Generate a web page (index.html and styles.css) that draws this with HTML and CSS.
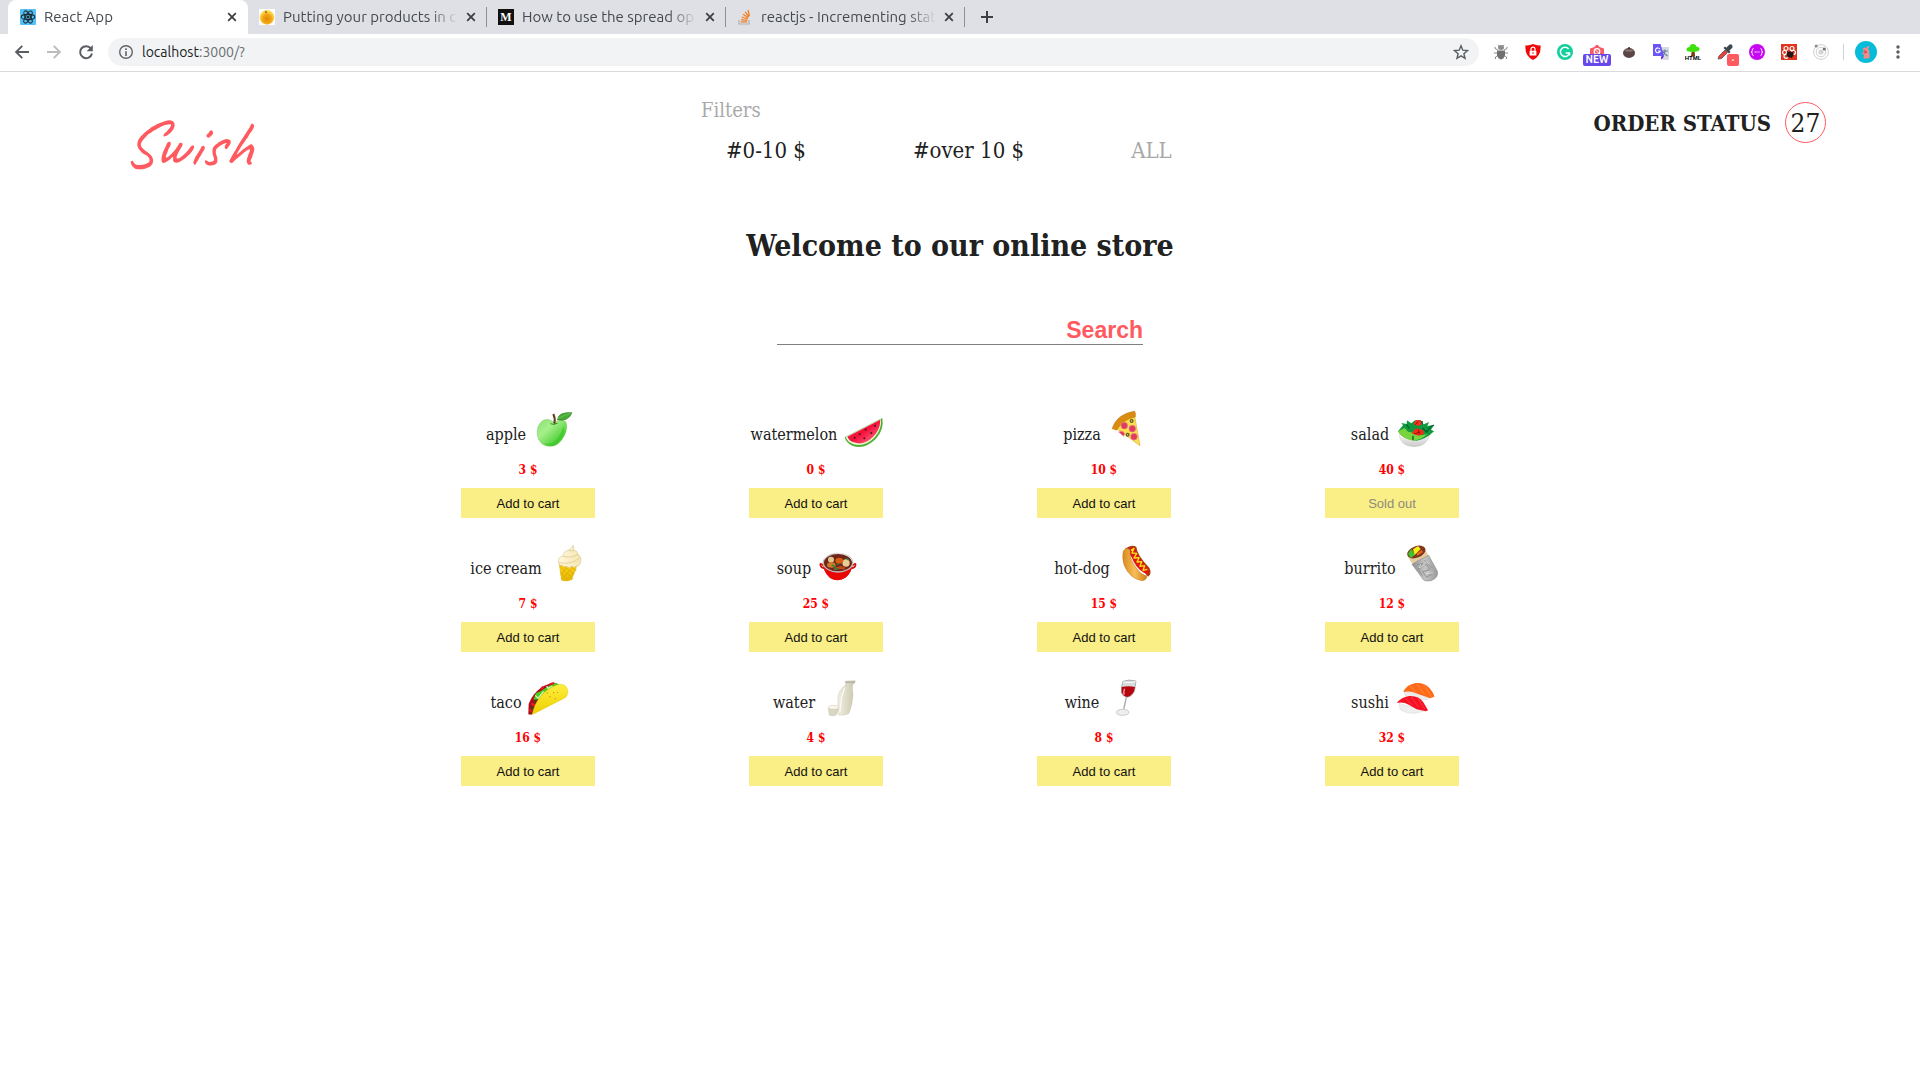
FILE: index.html
```html
<!DOCTYPE html>
<html lang="en">
<head>
<meta charset="utf-8">
<meta name="viewport" content="width=device-width, initial-scale=1">
<title>React App</title>
<link rel="stylesheet" href="styles.css">
</head>
<body>
<svg class="defs" aria-hidden="true">
  <defs>
    <symbol id="close" viewBox="0 0 10 10"><path d="M1.2 1.2 8.8 8.8M8.8 1.2 1.2 8.8" stroke="#3c4043" stroke-width="1.8" fill="none"/></symbol>
    <linearGradient id="gApple" x1="0" y1="0" x2="1" y2="1"><stop offset="0" stop-color="#8be070"/><stop offset=".35" stop-color="#a6f08c"/><stop offset=".75" stop-color="#4fd03a"/><stop offset="1" stop-color="#7bdd66"/></linearGradient>
    <linearGradient id="gMelon" x1="0" y1="0" x2="1" y2="1"><stop offset="0" stop-color="#ff2a50"/><stop offset=".5" stop-color="#f5103c"/><stop offset="1" stop-color="#ff7f96"/></linearGradient>
    <linearGradient id="gCone" x1="0" y1="0" x2="0" y2="1"><stop offset="0" stop-color="#fbd21c"/><stop offset="1" stop-color="#e8b800"/></linearGradient>
    <linearGradient id="gCream" x1="0" y1="0" x2="1" y2="0"><stop offset="0" stop-color="#fff8dc"/><stop offset="1" stop-color="#f5e5b0"/></linearGradient>
    <linearGradient id="gBun" x1="0" y1="0" x2="1" y2="0"><stop offset="0" stop-color="#d98a1f"/><stop offset=".5" stop-color="#f8bd58"/><stop offset="1" stop-color="#d07d14"/></linearGradient>
    <linearGradient id="gFoil" x1="0" y1="0" x2="1" y2="0"><stop offset="0" stop-color="#8f8f8f"/><stop offset=".5" stop-color="#c4c4c4"/><stop offset="1" stop-color="#9a9a9a"/></linearGradient>
    <linearGradient id="gTaco" x1="0" y1="0" x2="0" y2="1"><stop offset="0" stop-color="#ffee3e"/><stop offset="1" stop-color="#eed000"/></linearGradient>
    <linearGradient id="gBottle" x1="0" y1="0" x2="1" y2="0"><stop offset="0" stop-color="#f1efe4"/><stop offset="1" stop-color="#c9c5ac"/></linearGradient>
    <linearGradient id="gBowl" x1="0" y1="0" x2="0" y2="1"><stop offset="0" stop-color="#ffffff"/><stop offset="1" stop-color="#c9c9c9"/></linearGradient>
    <radialGradient id="gOrange" cx=".5" cy=".6"><stop offset="0" stop-color="#e08a00"/><stop offset=".6" stop-color="#f2a51a"/><stop offset="1" stop-color="#ffd84a"/></radialGradient>
  </defs>
</svg>

<header class="browser">
  <nav class="tabs" aria-label="Open tabs">
    <div class="tab tab-active">
      <svg class="favicon" viewBox="0 0 16 16"><rect width="16" height="16" rx="1" fill="#53c1f5"/><g fill="none" stroke="#1c2b33" stroke-width="1.1"><ellipse cx="8" cy="8" rx="6.8" ry="2.6"/><ellipse cx="8" cy="8" rx="6.8" ry="2.6" transform="rotate(60 8 8)"/><ellipse cx="8" cy="8" rx="6.8" ry="2.6" transform="rotate(120 8 8)"/></g><circle cx="8" cy="8" r="1.5" fill="#1c2b33"/></svg>
      <span class="tab-title">React App</span>
      <button class="tab-close" aria-label="Close tab"><svg><use href="#close"/></svg></button>
    </div>
    <div class="tab">
      <svg class="favicon" viewBox="0 0 16 16"><rect width="16" height="16" fill="#fff"/><circle cx="8" cy="8.4" r="7.3" fill="url(#gOrange)"/><path d="M6 2.5 8 4M7 2v2" stroke="#6b5a12" stroke-width=".8"/></svg>
      <span class="tab-title">Putting your products in c</span>
      <button class="tab-close" aria-label="Close tab"><svg><use href="#close"/></svg></button>
    </div>
    <div class="tab">
      <svg class="favicon" viewBox="0 0 16 16"><rect width="16" height="16" fill="#12100e"/><text x="8" y="12" text-anchor="middle" font-family="Liberation Serif, serif" font-weight="700" font-size="12" fill="#fff">M</text></svg>
      <span class="tab-title">How to use the spread op</span>
      <button class="tab-close" aria-label="Close tab"><svg><use href="#close"/></svg></button>
    </div>
    <div class="tab">
      <svg class="favicon" viewBox="0 0 16 16" fill="none"><path d="M2 11v4h10v-4" stroke="#a9b1b8" stroke-width="1.2"/><path d="M3.8 12.9h6.4M4 10.6l6.4.7M4.6 8l6.2 1.9M6 5.2l5.3 3.4M8.2 2.8l3.7 5M11 1l1.4 6" stroke="#f48024" stroke-width="1.3"/></svg>
      <span class="tab-title">reactjs - Incrementing stat</span>
      <button class="tab-close" aria-label="Close tab"><svg><use href="#close"/></svg></button>
    </div>
    <button class="new-tab" aria-label="New tab"><svg viewBox="0 0 12 12"><path d="M6 0v12M0 6h12" stroke="#3c4043" stroke-width="2"/></svg></button>
  </nav>
  <div class="toolbar">
    <div class="nav-buttons">
      <button class="icon" aria-label="Back"><svg viewBox="0 0 16 16"><path d="M15 8H2.5M8.3 1.8 2.1 8l6.2 6.2" fill="none" stroke="#5a5d61" stroke-width="1.9"/></svg></button>
      <button class="icon" aria-label="Forward"><svg viewBox="0 0 16 16"><path d="M1 8h12.5M7.7 1.8 13.9 8l-6.2 6.2" fill="none" stroke="#babcbe" stroke-width="1.9"/></svg></button>
      <button class="icon" aria-label="Reload"><svg viewBox="0 0 16 16"><path d="M13 4.6A6 6 0 1 0 14 9.5" fill="none" stroke="#5a5d61" stroke-width="2"/><path d="M14.8 1v6.2H8.6z" fill="#5a5d61"/></svg></button>
    </div>
    <div class="omnibox">
      <svg class="icon" viewBox="0 0 16 16"><circle cx="8" cy="8" r="6.3" fill="none" stroke="#5f6368" stroke-width="1.4"/><path d="M8 7.2V12M8 4.2v1.7" stroke="#5f6368" stroke-width="1.6"/></svg>
      <span class="url"><b>localhost</b>:3000/?</span>
      <button class="icon" aria-label="Bookmark this page"><svg viewBox="0 0 16 16"><path d="m8 1.8 1.8 4.4 4.7.4-3.6 3.1 1.1 4.6-4-2.5-4 2.5 1.1-4.6-3.6-3.1 4.7-.4z" fill="none" stroke="#5a5d61" stroke-width="1.4"/></svg></button>
    </div>
    <div class="extensions">
      <svg class="icon" viewBox="0 0 16 16"><g fill="none" stroke="#8a8a8a" stroke-width="1"><path d="M5 6 2 4.5V2.8M11 6l3-1.500V2.800M4 9H1M12 9h3M5 11.500 2.500 13v2M11 11.500l2.500 1.500v2M6 2 5 .8M10 2l1-1.200"/></g><ellipse cx="8" cy="3.500" rx="3" ry="2.500" fill="#8c8c8c"/><path d="M4 6.500h8V11q-1 4-4 4.500Q5 15 4 11z" fill="#707070"/></svg>
      <svg class="icon" viewBox="0 0 16 16"><path d="M8 0q4 1.800 7.500 1.300Q16.500 11.500 8 16-.5 11.500.5 1.300 4 1.800 8 0z" fill="#f00606"/><rect x="4.600" y="6.800" width="6.800" height="4.800" rx=".6" fill="#fff"/><path d="M6 7V5.200a2 2 0 0 1 4 0V7" fill="none" stroke="#fff" stroke-width="1.200"/><circle cx="8" cy="9" r=".8" fill="#f00606"/></svg>
      <svg class="icon" viewBox="0 0 16 16"><circle cx="8" cy="8" r="8" fill="#12cf9b"/><path d="M11.600 5A4.600 4.600 0 1 0 12.500 9H8.600M12.500 9v2.500" fill="none" stroke="#fff" stroke-width="1.500"/></svg>
      <div class="extension">
        <svg class="icon" viewBox="0 0 16 16"><path d="M5.500 3 7 1h2l1.500 2L15 4.500V10H1V4.500z" fill="#f55a66"/><circle cx="8" cy="7.500" r="2.800" fill="none" stroke="#fff" stroke-width="1.200"/><path d="m6 5.500 4 4" stroke="#fff"/></svg>
        <span class="badge badge-new">NEW</span>
      </div>
      <svg class="icon" viewBox="0 0 16 16"><ellipse cx="8" cy="9" rx="6" ry="5" fill="#5b4645"/><path d="M3 6.500Q8 3.500 13 6.500 8 9 3 6.500z" fill="#8a7573"/><path d="M7.300 5.500V3h1.500v2.500z" fill="#3b2a2a"/></svg>
      <svg class="icon" viewBox="0 0 16 16"><path d="M7 3h9v13H10z" fill="#d7dade"/><path d="M9 7h6M12 5.500V7c0 2-1 4-3 5m1-4 4.500 4" stroke="#64829c" stroke-width="1.200" fill="none"/><path d="M0 0h7.500L11 12H0z" fill="#6b55f5"/><path d="m8 12.500 3-.5-2.500 4z" fill="#4a10cf"/><path d="M6.900 5A2.400 2.400 0 1 0 7.200 7H5" fill="none" stroke="#fff" stroke-width="1.100"/></svg>
      <svg class="icon" viewBox="0 0 16 16"><path d="M7 6h2.500l.5 6H6z" fill="#7a3c0b"/><path d="M8 0q3 0 3.300 2.500Q15 3 14.500 5.500 14 8 11 7.500L9 8H6.500L4 7.500Q1 7.500 1.500 5 2 3 4.600 3 5 .2 8 0z" fill="#3fe010"/><text x="8" y="16" text-anchor="middle" font-family="Liberation Sans, sans-serif" font-weight="700" font-size="6" fill="#000">HTML</text></svg>
      <div class="extension">
        <svg class="icon" viewBox="0 0 16 16"><path d="M1 15 2 12l6-6 2.500 2.500-6 6z" fill="#e8413b" stroke="#555" stroke-width=".8"/><path d="m6.500 4 5.500 5.500 1.500-1.500-1.200-1.200L15.500 3.500Q16 1 14 .3 12.500 0 11 2L9.200 3.700 8 2.500z" fill="#3d464c"/></svg>
        <span class="badge badge-dot">·</span>
      </div>
      <svg class="icon" viewBox="0 0 16 16"><circle cx="8" cy="8" r="8" fill="#c808f3"/><path d="M4.500 4.500Q3 4.500 3.300 6.500 3.400 8 2 8q1.400 0 1.300 1.500Q3 11.500 4.500 11.500M11.500 4.500q1.500 0 1.200 2Q12.600 8 14 8q-1.400 0-1.300 1.500.3 2-1.200 2M5.500 8h1.300M7.400 8h1.200M9.300 8h1.300" fill="none" stroke="#fff" stroke-width="1"/></svg>
      <svg class="icon" viewBox="0 0 16 16"><rect width="16" height="16" fill="#e0351f"/><g fill="none" stroke="#fff" stroke-width="1.200"><circle cx="5" cy="4.500" r="2"/><circle cx="11" cy="4.500" r="2"/><circle cx="3.600" cy="8.500" r="2"/><circle cx="12.500" cy="8.500" r="2"/><circle cx="5" cy="12.300" r="2"/></g><ellipse cx="9" cy="10.500" rx="3.500" ry="3" fill="#241614"/><path d="m6 7 5 7M12 7.500l-5 6" stroke="#241614"/></svg>
      <svg class="icon" viewBox="0 0 16 16"><g fill="none" stroke="#cfcfcf"><circle cx="8" cy="8" r="7.400"/><circle cx="8" cy="8" r="4.800"/></g><circle cx="8" cy="8" r="2.600" fill="#d4d4d4"/><circle cx="3.200" cy="2" r="1.600" fill="#8d8d8d"/><circle cx="11.300" cy="5" r="1.600" fill="#707070"/></svg>
    </div>
    <div class="profile">
      <svg class="avatar" viewBox="0 0 22 22"><circle cx="11" cy="11" r="11" fill="#07bcd9"/><path d="M8 8.500Q7.500 6.500 10 6.500L11.500 7Q12 4.500 14 5q.5 1.500-1 3 2 1.500 1.200 4 1.300 3-.2 5.500H8.500L9 14l-2.500-2 2.500-.8Z" fill="#f48a8a"/><path d="m9 9.500 3 1.500-3 1" stroke="#d94040" fill="none"/></svg>
      <button class="menu" aria-label="Browser menu"><svg viewBox="0 0 4 14" fill="#5a5d61"><circle cx="2" cy="2" r="1.700"/><circle cx="2" cy="7" r="1.700"/><circle cx="2" cy="12" r="1.700"/></svg></button>
    </div>
  </div>
</header>

<main class="store">
  <div class="store-header">
    <a class="logo" href="#">Swish</a>
    <section class="filters">
      <p class="filters-label">Filters</p>
      <div class="filters-list">
        <button class="filter">#0-10 $</button>
        <button class="filter">#over 10 $</button>
        <button class="filter filter-current">ALL</button>
      </div>
    </section>
    <a class="order" href="#">ORDER STATUS <span class="order-count">27</span></a>
  </div>

  <h1 class="title">Welcome to our online store</h1>

  <form class="search">
    <input class="search-input" type="text" placeholder="Search" aria-label="Search">
  </form>

  <ul class="products">
    <li class="product">
      <div class="product-name">apple
        <svg class="food" viewBox="270 54 120 120"><path d="M343 99q18-15 34-4 8 18-4 42-16 32-42 32-32-1-39-32-3-32 16-45 20-10 35 7z" fill="url(#gApple)" stroke="#4eae3a" stroke-width="1"/><path d="M312 160q22 5 40-14 12-14 18-38 6 16-4 34-14 24-34 25-12 0-20-7z" fill="#38c724" opacity=".65"/><path d="M331 101q12 6 22-2" fill="none" stroke="#379a24" stroke-width="3"/><path d="M343 101q4-14-3-29" fill="none" stroke="#65401e" stroke-width="6"/><path d="M352 89q3-24 44-21-12 29-44 21z" fill="#45ab33" stroke="#2a6a22" stroke-width="1.500"/><path d="M354 86q18-11 38-16" fill="none" stroke="#77ce67" stroke-width="2"/></svg>
      </div>
      <p class="price">3 $</p>
      <button class="cart">Add to cart</button>
    </li>
    <li class="product">
      <div class="product-name">watermelon
        <svg class="food" viewBox="1209 54 120 120"><path d="M1220 142 1333 84q6 36-20 63-33 33-70 20-18-7-23-25z" fill="#4fb034"/><path d="M1223 141 1329 87q3 32-20 56-30 30-64 19-17-6-22-21z" fill="#eaf7d0"/><path d="m1228 140 99-51q0 30-22 52-28 27-58 16-14-5-19-17z" fill="url(#gMelon)"/><g fill="#451820"><circle cx="1265" cy="133" r="3"/><circle cx="1283" cy="119" r="3"/><circle cx="1311" cy="107" r="3"/><circle cx="1250" cy="143" r="3"/><circle cx="1279" cy="145" r="3"/><circle cx="1300" cy="129" r="3"/></g></svg>
      </div>
      <p class="price">0 $</p>
      <button class="cart">Add to cart</button>
    </li>
    <li class="product">
      <div class="product-name">pizza
        <svg class="food" viewBox="256 54 120 120"><path d="M286 112q20-28 58-38l17 93z" fill="#fbe04d" stroke="#e0a92a" stroke-width="2"/><path d="M277 116q14-44 68-53 4 6 2 18-38 7-56 40z" fill="#d98b12" stroke="#b16b08" stroke-width="1"/><g fill="#df3a5f" stroke="#ec8c88" stroke-width="2"><circle cx="314" cy="107" r="10"/><circle cx="338" cy="116" r="10"/><path d="M297 126q14-7 18 5l-3 8z"/><circle cx="343" cy="140" r="10"/></g><g fill="#fbe78c" stroke="#5d5d21" stroke-width="4"><circle cx="336" cy="93" r="4"/><circle cx="324" cy="134" r="4"/></g></svg>
      </div>
      <p class="price">10 $</p>
      <button class="cart">Add to cart</button>
    </li>
    <li class="product">
      <div class="product-name">salad
        <svg class="food" viewBox="1121 54 120 120"><path d="M1139 130q2 39 44 40 42 0 50-42z" fill="url(#gBowl)" stroke="#bbb" stroke-width="1"/><path d="m1136 124 15-18-5-7 16 3 1-11 13 9 12-10 7 10 16-8-2 13 20-9-5 12 20-3-9 14 9 5q-24 24-53 28-42-4-55-28z" fill="#0c9a3d"/><path d="m1136 124 20-10 10 11 15 3 24 8 20-4q-20 18-42 20-32-4-47-28z" fill="#78d43d"/><path d="m1182 102 8-12h14l6 11-13 8z" fill="#f03320"/><path d="m1177 130 12-15 22 5 3 12-17 5z" fill="#f32d17"/><path d="m1184 132 19-6M1196 119l5 15M1188 104l8-9" stroke="#9a1208" stroke-width="3"/><path d="m1209 114 13 12 12-16 10-5M1162 104l8 12M1211 105l-5-11M1181 137v14" fill="none" stroke="#075e32" stroke-width="4"/></svg>
      </div>
      <p class="price">40 $</p>
      <button class="cart cart-sold" disabled>Sold out</button>
    </li>
    <li class="product">
      <div class="product-name">ice cream
        <svg class="food" viewBox="319 456 120 120"><path d="m358 519 8 52q14 5 30-2l16-43z" fill="url(#gCone)" stroke="#c7a000" stroke-width="1"/><path d="m362 529 38 39M361 545l23 26M371 528l33 25M389 528l21 12M379 534l-17 22M399 534l-34 34M410 539l-31 32" stroke="#d8a800" stroke-width="2"/><path d="M357 519q-5-19 14-21-2-14 15-17 10-3 14-15 5 8 2 15 12 1 13 12 12 7 8 22-2 15-13 13-7 8-13 1-10 9-15 0-11 4-14-3-9 2-11-7z" fill="url(#gCream)" stroke="#d1bd8b" stroke-width="1.500"/><path d="M371 499q24 7 44-6M386 481q10 4 17 0M357 517q33 10 63-13" fill="none" stroke="#d8c28a" stroke-width="2"/></svg>
      </div>
      <p class="price">7 $</p>
      <button class="cart">Add to cart</button>
    </li>
    <li class="product">
      <div class="product-name">soup
        <svg class="food" viewBox="1127 456 120 120"><path d="M1151 526q-11-10-7 1 1 7 12 8M1240 526q11-10 8 1-1 7-12 8" fill="none" stroke="#d40b05" stroke-width="5"/><path d="M1150 518h91q-2 28-23 45-24 15-47 0-19-19-21-45z" fill="#f10d05"/><path d="M1154 535q42 24 82 0-3 16-16 27-23 15-46 2-17-12-20-29z" fill="#e80703"/><ellipse cx="1196" cy="518" rx="44" ry="28" fill="#722419" stroke="#bbb" stroke-width="4"/><circle cx="1175" cy="509" r="9" fill="#dfc68f"/><circle cx="1220" cy="519" r="11" fill="#e5ce95"/><ellipse cx="1200" cy="512" rx="12" ry="9" fill="#da5b12"/><ellipse cx="1176" cy="525" rx="13" ry="8" fill="#ce7a28"/><path d="m1184 537 20-5 12 4" stroke="#c9461b" stroke-width="8" fill="none"/><path d="m1178 525 9 5 2 8 9-4M1192 524l7-3M1222 505l6 6" fill="none" stroke="#168b44" stroke-width="4"/><path d="M1154 508q16-24 44-18 31 0 42 24" fill="none" stroke="#fff" stroke-width="2"/></svg>
      </div>
      <p class="price">25 $</p>
      <button class="cart">Add to cart</button>
    </li>
    <li class="product">
      <div class="product-name">hot-dog
        <svg class="food" viewBox="285 456 120 120"><path d="M318 477q22-16 34-6 2 25 39 62 9 19-4 27z" fill="#a83c0c"/><path d="M333 475q12-8 16 1 1 21 37 57 7 9 2 20-28-7-44-38-11-22-11-40z" fill="#e31713"/><path d="M313 483q9-14 20-3-2 29 21 57 15 19 29 20 2 13-15 15-36-7-52-45-8-24-3-44z" fill="url(#gBun)" stroke="#bd7415" stroke-width="1.500"/><path d="m336 481 9-6-6 14 14 1-8 14 15-1-6 13 14-1-5 14 14-2-5 14 13-3" fill="none" stroke="#ffe516" stroke-width="4" stroke-linejoin="round"/></svg>
      </div>
      <p class="price">15 $</p>
      <button class="cart">Add to cart</button>
    </li>
    <li class="product">
      <div class="product-name">burrito
        <svg class="food" viewBox="1139 456 120 120"><path d="m1162 486 51-9 38 67q5 19-19 28-16 3-22-2l-37-53q-12-14-11-31z" fill="#e6cca0"/><path d="m1175 523 20-12 30-15 26 48q5 19-19 28-16 3-22-2z" fill="url(#gFoil)" stroke="#929292" stroke-width="2"/><ellipse cx="1188" cy="486" rx="29" ry="17" fill="#7f361e" transform="rotate(-22 1188 486)"/><path d="m1164 490 9-13 11 17-11 9q-8-2-9-13z" fill="#3ec42c"/><path d="m1178 478 15-10 8 9-18 18z" fill="#f7ef13"/><path d="m1190 494 16-11" stroke="#e5661b" stroke-width="7"/><path d="m1190 525 17-5-12 17 24-15 9 18-21 5 11 17 18-11M1212 510l24 24M1193 536l13 21" fill="none" stroke="#808080" stroke-width="2"/><path d="m1201 522-4 12 16-9M1228 541l-9 10 19-3M1217 515l10 7" fill="none" stroke="#e8e8e8" stroke-width="2"/></svg>
      </div>
      <p class="price">12 $</p>
      <button class="cart">Add to cart</button>
    </li>
    <li class="product">
      <div class="product-name">taco
        <svg class="food" viewBox="257 48 120 120"><path d="m264 163 1-31q12-31 39-50 24-15 44-12l11 12-86 82z" fill="#b50919"/><path d="m268 162 2-20 17-30 16-8-18 50z" fill="#6b2d12"/><path d="m279 119 8-20 14-5 14-10 14-8 14-8 10 3 10 9-29 10-24 10-16 18z" fill="#43cf20"/><path d="m285 106 8 9 17-21M319 78l4 7 13-7" fill="none" stroke="#d9f7bb" stroke-width="4"/><path d="m268 149 6 5M273 131l12 5M302 88l7-8M328 73l14-4" stroke="#f01526" stroke-width="7"/><path d="M275 164q13-58 60-83 34-18 45 3 7 17-5 29z" fill="url(#gTaco)" stroke="#e2b400" stroke-width="1"/><g fill="#c78f00"><circle cx="329" cy="110" r="2"/><circle cx="340" cy="98" r="2"/><circle cx="352" cy="97" r="2"/><circle cx="321" cy="99" r="2"/><circle cx="345" cy="116" r="2"/></g></svg>
      </div>
      <p class="price">16 $</p>
      <button class="cart">Add to cart</button>
    </li>
    <li class="product">
      <div class="product-name">water
        <svg class="food" viewBox="1138 48 120 120"><path d="m1216 63 31-1-3 8-5 5q-2 11 1 27-1 32-12 58-10 8-31 5l-3-6 1-48q2-20 20-34l4-8z" fill="url(#gBottle)" stroke="#bbb8a4" stroke-width="1"/><path d="m1217 67 29-1" stroke="#a8a490" stroke-width="3"/><path d="m1166 143 3 22q10 5 20 0l9-24z" fill="#d9d6c2" stroke="#aaa690" stroke-width="1"/><ellipse cx="1182" cy="142" rx="16" ry="6" fill="#f8f7ec" stroke="#b5b198"/><path d="m1215 83-10 31-4 42" fill="none" stroke="#faf9f0" stroke-width="4"/></svg>
      </div>
      <p class="price">4 $</p>
      <button class="cart">Add to cart</button>
    </li>
    <li class="product">
      <div class="product-name">wine
        <svg class="food" viewBox="254 48 120 120"><path d="m324 112-9 41" stroke="#aaa" stroke-width="4"/><ellipse cx="313" cy="157" rx="19" ry="9" fill="#eee" stroke="#b5b5b5" stroke-width="2"/><path d="m312 151 5-5 3 5" fill="#ddd"/><path d="M314 64q18-7 39-1l-4 28q-6 17-22 21-14-3-18-14-1-18 5-34z" fill="#d7dcdc" stroke="#8d9292" stroke-width="2"/><path d="M310 81q20-5 40 0l-3 13q-7 14-20 17-12-3-17-13z" fill="#b5060e"/><path d="M319 86q-5 11-1 18" fill="none" stroke="#e9a0a3" stroke-width="4"/><path d="M315 66q18 5 37-1" fill="none" stroke="#fff" stroke-width="3"/></svg>
      </div>
      <p class="price">8 $</p>
      <button class="cart">Add to cart</button>
    </li>
    <li class="product">
      <div class="product-name">sushi
        <svg class="food" viewBox="1122 48 120 120"><path d="m1155 93 3 13q27 16 66 13l12-9z" fill="#ececec" stroke="#c9c9c9"/><path d="M1153 96q9-22 37-27 27-2 42 16 13 16 14 25l-12 5-26-9-28-10q-13-3-27 0z" fill="#ff6a1a"/><path d="m1172 77 19 20M1192 71l25 32M1213 73l25 38" fill="none" stroke="#ff9a50" stroke-width="2"/><path d="m1140 130 3 18q18 14 51 11l24-7z" fill="#eee" stroke="#c8c8c8"/><path d="M1133 130q12-18 37-22 29-2 43 19l14 24-6 3-28-6-24-14q-17-10-36-5z" fill="#f51224"/><path d="m1159 115 20 19M1176 111l23 30M1196 113l21 34" fill="none" stroke="#ff4a56" stroke-width="2"/></svg>
      </div>
      <p class="price">32 $</p>
      <button class="cart">Add to cart</button>
    </li>
  </ul>
</main>
</body>
</html>
```

FILE: styles.css
```css
* {
  box-sizing: border-box;
}

body {
  margin: 0;
  background: #fff;
  color: #212121;
  font-family: "Roboto Slab", "DejaVu Serif Condensed", "DejaVu Serif", serif;
}

button {
  padding: 0;
  border: 0;
  background: none;
  color: inherit;
}

svg {
  display: block;
}

.defs {
  position: absolute;
  width: 0;
  height: 0;
}

/* Browser frame */

.browser {
  border-bottom: 1px solid #d9dadc;
  font-family: Ubuntu, "Noto Sans", sans-serif;
  font-size: 14px;
  color: #45484c;
}

.tabs {
  display: flex;
  height: 34px;
  padding-left: 8px;
  background: #dee0e5;
}

.tab {
  display: flex;
  align-items: center;
  flex: 0 1 239px;
  min-width: 0;
  gap: 8px;
  padding: 0 11px;
  background: linear-gradient(#8e9196, #8e9196) right center / 1px 20px no-repeat;
}

.tab-active {
  flex-basis: 240px;
  padding-left: 12px;
  border-radius: 8px 8px 0 0;
  background: #fff;
}

.favicon,
.icon {
  flex: none;
  width: 16px;
  height: 16px;
}

.tab-title {
  flex: 1;
  font-size: 15px;
  line-height: 16px;
  white-space: nowrap;
  mask-image: linear-gradient(to left, transparent, #000 28px);
}

.tab-close svg {
  width: 10px;
  height: 10px;
}

.new-tab {
  margin-left: 16px;
}

.new-tab svg {
  width: 12px;
  height: 12px;
}

.toolbar {
  display: flex;
  align-items: center;
  gap: 14px;
  height: 37px;
  padding: 0 14px 1px;
}

.nav-buttons,
.extensions {
  display: flex;
  gap: 16px;
}

.omnibox {
  display: flex;
  flex: 1;
  align-items: center;
  gap: 8px;
  height: 28px;
  padding: 0 10px;
  border-radius: 14px;
  background: #f1f3f4;
}

.url {
  flex: 1;
  color: #6b6e72;
}

.url b {
  color: #202124;
  font-weight: 400;
}

.extension {
  position: relative;
}

.badge {
  position: absolute;
  top: 10px;
  height: 12px;
  border-radius: 2px;
  color: #fff;
  font-size: 10px;
  font-weight: 700;
  line-height: 12px;
  text-align: center;
}

.badge-new {
  left: -6px;
  width: 28px;
  background: #6748e8;
}

.badge-dot {
  left: 10px;
  width: 12px;
  background: #ff5a5f;
}

.profile {
  display: flex;
  align-items: center;
  gap: 19px;
  padding-left: 12px;
  background: linear-gradient(#cfd1d4, #cfd1d4) left center / 1px 16px no-repeat;
}

.avatar {
  width: 22px;
  height: 22px;
}

.menu svg {
  width: 4px;
  height: 14px;
}

.profile .menu {
  padding-right: 6px;
}

/* Store */

.store-header {
  display: grid;
  grid-template-columns: 1fr 518px 1fr;
  align-items: start;
  padding: 28px 94px 0;
}

.logo {
  margin-top: 10px;
  padding-left: 27px;
  color: #ff5a5f;
  font-family: Caveat, Lato, cursive;
  font-size: 66px;
  font-style: italic;
  line-height: 70px;
  text-decoration: none;
}

.filters-label {
  margin: 0;
  color: #a9a9a9;
  font-size: 20px;
  line-height: 20px;
}

.filters-list {
  display: flex;
  gap: 107px;
  padding: 17px 0 0 25px;
}

.filter {
  font-family: inherit;
  font-size: 22px;
  line-height: 28px;
  white-space: nowrap;
}

.filter-current {
  color: #a9a9a9;
}

.order {
  display: flex;
  align-items: center;
  justify-content: flex-end;
  gap: 14px;
  margin-top: 2px;
  color: inherit;
  font-size: 22px;
  font-weight: 700;
  text-decoration: none;
  white-space: nowrap;
}

.order-count {
  width: 41px;
  height: 41px;
  border: 1px solid #ff5a5f;
  border-radius: 50%;
  font-size: 26px;
  font-weight: 400;
  line-height: 40px;
  text-align: center;
}

.title {
  margin: 46px 0 0;
  font-size: 30px;
  font-weight: 700;
  line-height: 40px;
  text-align: center;
}

.search {
  display: flex;
  justify-content: center;
  margin-top: 48px;
}

.search-input {
  width: 366px;
  height: 31px;
  padding: 2px 0 0;
  border: 0;
  border-bottom: 1px solid #808080;
  outline: 0;
  background: none;
  color: #ff5a5f;
  font: 700 23px "Liberation Sans", Arial, sans-serif;
  text-align: right;
}

.search-input::placeholder {
  color: #ff5a5f;
  opacity: 1;
}

.products {
  display: grid;
  grid-template-columns: repeat(4, 1fr);
  row-gap: 24px;
  width: 60%;
  margin: 63px auto 0;
  padding: 0;
  list-style: none;
}

.product {
  display: flex;
  flex-direction: column;
  align-items: center;
}

.product-name {
  display: flex;
  gap: 4px;
  height: 40px;
  font-size: 16px;
  line-height: 54px;
}

.food {
  width: 40px;
  height: 40px;
  overflow: visible;
}

.price {
  margin: 0;
  padding-top: 4px;
  color: #f00;
  font-size: 12px;
  font-weight: 700;
  line-height: 36px;
}

.cart {
  width: 134px;
  height: 30px;
  background: #faee86;
  color: #111;
  font: 13px "Liberation Sans", Arial, sans-serif;
}

.cart-sold {
  color: #8c8c7c;
}
```
